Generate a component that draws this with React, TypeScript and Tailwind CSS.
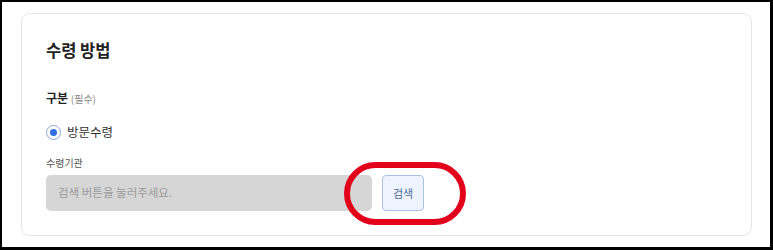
export default function App() {
    return (
        <div
            className="relative h-[250px] w-[773px] overflow-hidden border-b-[3px] border-l-2 border-r-[3px] border-t-2 border-black bg-white pl-[19px] pr-[18px] pt-[11px]"
            style={{ fontFamily: '"Noto Sans CJK KR", "Noto Sans", sans-serif' }}
        >
            <section className="rounded-[9px] border border-[#e6e6e6] bg-white px-6 pb-6 pt-6">
                {/* 제목 */}
                <h2 className="text-[16.5px] font-bold leading-[24px] text-[#222]">수령 방법</h2>

                {/* 구분 */}
                <p className="mt-[27px] text-[12px] font-bold leading-[18px] text-[#222]">
                    구분 <span className="text-[10px] font-normal text-[#888]">(필수)</span>
                </p>

                <label className="mt-[14px] flex h-5 items-center gap-[6px]">
                    <span className="flex h-[15px] w-[15px] items-center justify-center rounded-full border border-[#8aa6d6] bg-white">
                        <span className="h-[7px] w-[7px] rounded-full bg-[#2f6fe0]" />
                    </span>
                    <span className="text-[12.5px] leading-5 text-[#333]">방문수령</span>
                </label>

                {/* 수령기관 */}
                <p className="mt-[13px] text-[10px] leading-[15px] text-[#555]">수령기관</p>

                <div className="mt-[5px] flex items-center gap-[10px]">
                    <div className="flex h-9 w-[326px] items-center rounded-[5px] bg-[#d6d6d6] px-3 text-[11.5px] text-[#9c9c9c]">
                        검색 버튼을 눌러주세요.
                    </div>
                    <button className="h-9 w-[42px] rounded-[4px] border border-[#a9c1e4] bg-[#eef4fd] text-[11px] text-[#4d6b98]">
                        검색
                    </button>
                </div>
            </section>

            {/* 빨간 강조 표시 */}
            <div className="absolute left-[342px] top-[160px] h-[63px] w-[122px] rounded-full border-[6px] border-[#e2001a]" />
        </div>
    );
}
